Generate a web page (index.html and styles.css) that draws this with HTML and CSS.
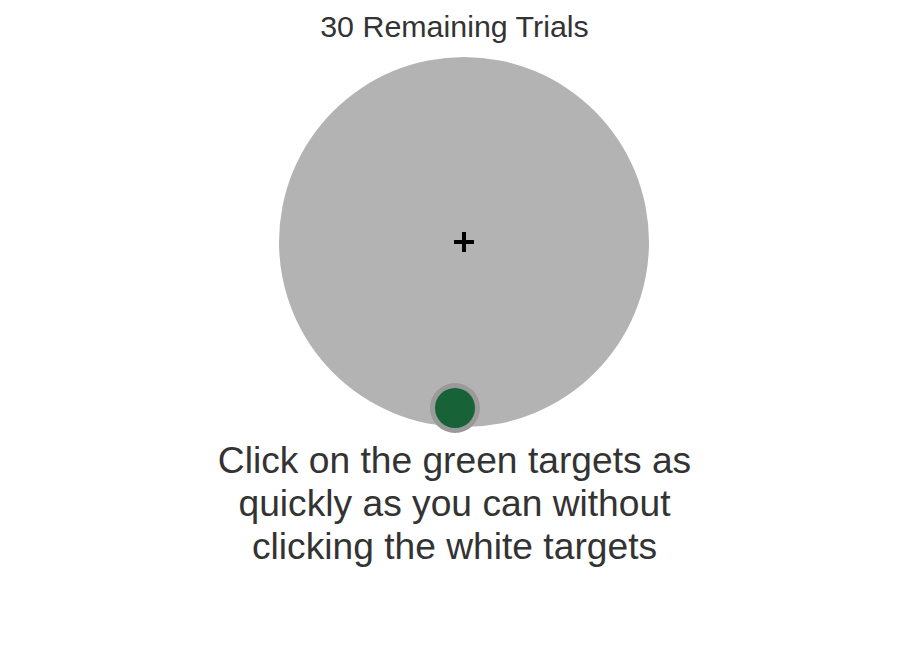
FILE: index.html
```html
<!DOCTYPE html>
<html>
<head>
<meta charset="utf-8">
<link rel="stylesheet" href="styles.css">
</head>
<body>
<main class="task">
  <h1 class="trials">30 Remaining Trials</h1>
  <div class="arena">
    <div class="fixation">
      <span class="bar bar-h"></span>
      <span class="bar bar-v"></span>
    </div>
    <div class="target" style="left: 151px; top: 326px;"><span class="target-core"></span></div>
  </div>
  <p class="instructions">Click on the green targets as quickly as you can without clicking the white targets</p>
</main>
</body>
</html>
```

FILE: styles.css
```css
html, body {
  margin: 0;
  padding: 0;
  background: #ffffff;
}

body {
  font-family: "Liberation Sans", Arial, sans-serif;
  color: #333333;
}

.task {
  display: flex;
  flex-direction: column;
  align-items: center;
  padding-top: 9px;
}

.trials {
  margin: 0;
  font-size: 30.4px;
  line-height: 34px;
  font-weight: normal;
  color: #333333;
}

.arena {
  position: relative;
  width: 370px;
  height: 370px;
  margin-top: 14px;
  margin-left: 18px;
  border-radius: 50%;
  background: #b3b3b3;
  display: flex;
  align-items: center;
  justify-content: center;
}

.fixation {
  position: relative;
  width: 20px;
  height: 20px;
}

.bar {
  position: absolute;
  background: #000000;
}

.bar-h {
  left: 0;
  top: 8px;
  width: 20px;
  height: 4px;
}

.bar-v {
  left: 8px;
  top: 0;
  width: 4px;
  height: 20px;
}

.target {
  position: absolute;
  width: 50px;
  height: 50px;
  border-radius: 50%;
  background: #9a9a9a;
  display: flex;
  align-items: center;
  justify-content: center;
}

.target-core {
  width: 40px;
  height: 40px;
  border-radius: 50%;
  background: #176237;
}

.instructions {
  margin: 12px 0 0;
  max-width: 490px;
  font-size: 37.2px;
  line-height: 43px;
  text-align: center;
  color: #333333;
}
```
